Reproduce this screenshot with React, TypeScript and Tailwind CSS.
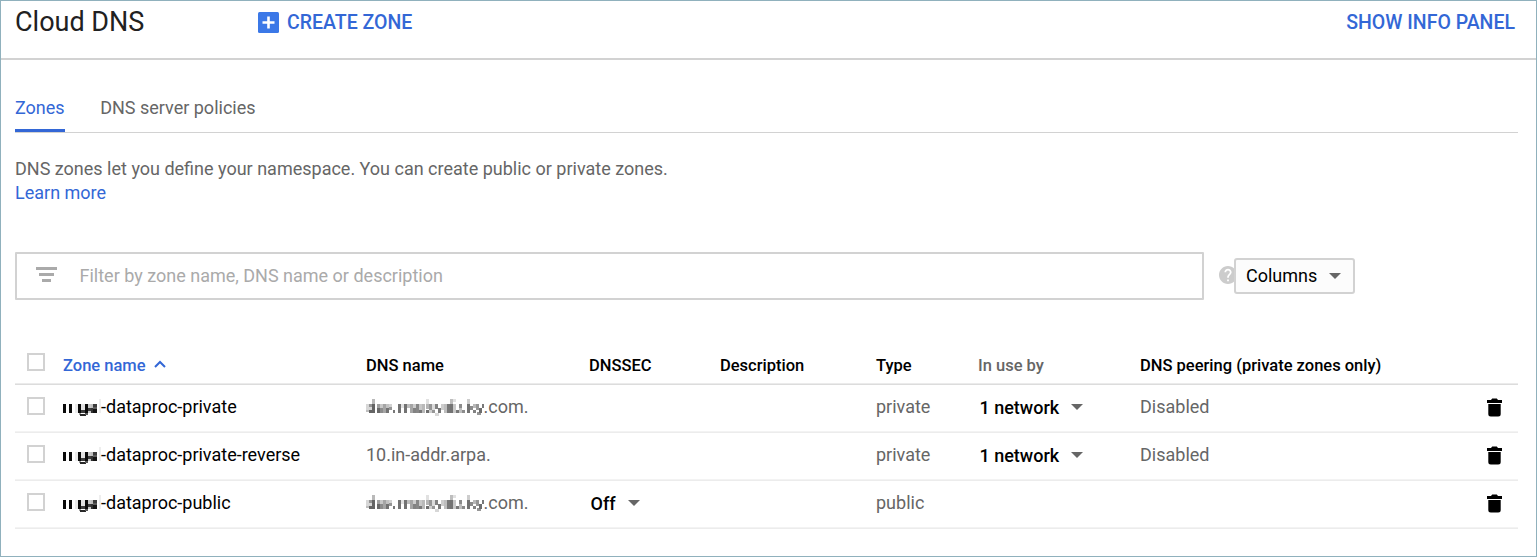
import React from "react";

const COLS =
  "grid grid-cols-[48px_303px_223px_131px_156px_102px_162px_346px_1fr]";

function Checkbox({ className = "" }: { className?: string }) {
  return (
    <span
      role="checkbox"
      aria-checked="false"
      className={"ml-3 block h-[18px] w-[18px] border-2 border-[#d2d2d2] bg-white " + className}
    />
  );
}

function Caret({ className = "" }: { className?: string }) {
  return (
    <svg viewBox="0 0 12 6" className={"h-[6px] w-[12px] shrink-0 fill-[#666] " + className}>
      <path d="M0 0h12L6 6z" />
    </svg>
  );
}

function Trash() {
  return (
    <svg viewBox="0 0 17 20" className="mt-px h-5 w-[17px] fill-black">
      <path d="M1 3h4l1.200-1.400h4.600L12 3h4v3H1z" />
      <path d="M2.300 7h12.400v10a2.500 2.500 0 0 1-2.500 2.500H4.800a2.500 2.500 0 0 1-2.500-2.500z" />
    </svg>
  );
}

type Cell = [x: number, y: number, w: number, h: number, shade: number];

const NAME_CELLS: Cell[] = [
  [0, 7, 3, 9, 10], [6, 7, 3, 9, 10], [12, 7, 3, 9, 235],
  [15, 7, 3, 9, 10], [18, 7, 4, 6, 225], [18, 13, 4, 3, 60],
  [22, 7, 3, 9, 10], [16, 16, 2, 2, 160], [17, 17, 6, 2, 40], [22, 16, 3, 2, 90],
  [25, 7, 3, 4, 200], [25, 11, 3, 3, 60], [25, 14, 3, 2, 200],
  [28, 7, 2, 4, 190], [28, 11, 2, 5, 50], [30, 7, 4, 3, 60], [30, 10, 4, 2, 90], [30, 12, 4, 4, 20],
  [36, 2, 2, 14, 238],
];

const HOST_CELLS: Cell[] = [
  [0, 7, 6, 6, 215], [0, 13, 3, 2, 190], [3, 7, 3, 3, 150], [3, 13, 3, 3, 100], [6, 2, 3, 5, 185], [6, 7, 3, 9, 100],
  [11, 7, 3, 4, 160], [11, 11, 3, 5, 105], [14, 7, 3, 4, 200], [14, 11, 3, 5, 140], [17, 7, 3, 9, 165],
  [20, 7, 3, 4, 195], [20, 11, 3, 5, 115], [23, 7, 3, 3, 210], [23, 10, 3, 3, 150], [27, 13, 2, 3, 120],
  [32, 7, 3, 9, 115], [35, 7, 3, 4, 225], [38, 7, 3, 9, 115], [41, 7, 3, 4, 190], [44, 7, 3, 9, 165], [47, 7, 3, 4, 205], [47, 11, 3, 5, 130],
  [50, 7, 3, 9, 135], [53, 7, 3, 6, 200], [53, 13, 3, 3, 120], [56, 7, 3, 9, 185], [60, 2, 3, 5, 225], [60, 7, 3, 5, 180], [60, 13, 3, 3, 110],
  [63, 7, 3, 6, 150], [63, 13, 3, 3, 205], [66, 7, 3, 6, 220], [66, 13, 3, 3, 150], [69, 7, 3, 5, 130], [69, 16, 4, 3, 215], [72, 11, 3, 5, 120], [75, 7, 3, 6, 205],
  [78, 7, 3, 9, 190], [81, 7, 3, 9, 120], [84, 2, 3, 14, 190], [84, 7, 3, 9, 115], [87, 2, 3, 3, 225], [87, 7, 3, 9, 200], [90, 13, 3, 3, 120],
  [93, 7, 3, 4, 140], [93, 11, 3, 5, 190], [96, 13, 3, 3, 140], [101, 2, 3, 5, 205], [101, 7, 3, 9, 115], [104, 9, 3, 4, 140], [107, 7, 3, 4, 185], [107, 13, 3, 3, 130],
  [110, 7, 3, 6, 150], [111, 15, 4, 3, 150], [113, 11, 3, 5, 110], [116, 7, 2, 4, 120],
];

function Mosaic({ cells, width }: { cells: Cell[]; width: number }) {
  return (
    <svg width={width} height={20} viewBox={`0 0 ${width} 20`} className="mt-px shrink-0" shapeRendering="crispEdges" aria-hidden="true">
      {cells.map(([x, y, w, h, s], i) => (
        <rect key={i} x={x} y={y} width={w} height={h} fill={`rgb(${s},${s},${s})`} />
      ))}
    </svg>
  );
}

interface Zone {
  name: string;
  host: string;
  masked: boolean;
  dnssec?: string;
  type: string;
  networks?: string;
  peering?: string;
}

const ZONES: Zone[] = [
  { name: "-dataproc-private", host: ".com.", masked: true, type: "private", networks: "1 network", peering: "Disabled" },
  { name: "-dataproc-private-reverse", host: "10.in-addr.arpa.", masked: false, type: "private", networks: "1 network", peering: "Disabled" },
  { name: "-dataproc-public", host: ".com.", masked: true, dnssec: "Off", type: "public" },
];

function Row({ zone }: { zone: Zone }) {
  return (
    <div className={COLS + " h-12 items-center border-b border-[#ececec] pb-1 text-[18px] text-[#666] shadow-[inset_0_-1px_0_#f3f3f3]"}>
      <Checkbox className="-mt-px" />
      <div className="flex items-center text-black">
        <Mosaic cells={NAME_CELLS} width={38} />
        <span>{zone.name}</span>
      </div>
      <div className="flex items-center">
        {zone.masked && <Mosaic cells={HOST_CELLS} width={117.5} />}
        <span>{zone.host}</span>
      </div>
      <div className="flex items-center pl-[1.5px] pt-[2px] font-medium text-black">
        {zone.dnssec && (<><span>{zone.dnssec}</span><Caret className="-mt-[2px] ml-[12.5px]" /></>)}
      </div>
      <div />
      <div>{zone.type}</div>
      <div className="flex items-center pl-[1.5px] pt-[2px] font-medium text-black">
        {zone.networks && (<><span>{zone.networks}</span><Caret className="-mt-[2px] ml-[11.5px]" /></>)}
      </div>
      <div>{zone.peering}</div>
      <Trash />
    </div>
  );
}

export default function App() {
  return (
    <div className="flex h-[557px] w-[1537px] flex-col overflow-hidden border border-[#90b1bd] bg-white font-['Roboto',sans-serif] whitespace-nowrap">
      <header className="flex h-[59px] shrink-0 items-start border-b-2 border-[#d2d2d2] pl-[14px] pr-[21px]">
        <h1 className="w-[243px] text-[27px] leading-[43px] text-[#212121]">Cloud DNS</h1>
        <button className="flex h-[42px] items-center gap-[8px] text-[19.500px] font-medium text-[#3367d6]">
          <svg viewBox="0 0 21 21" className="h-[21px] w-[21px]">
            <rect width="21" height="21" rx="1.5" fill="#3b78e7" />
            <path d="M4.500 10.500h12M10.500 4.500v12" stroke="#fff" strokeWidth="2.600" />
          </svg>
          <span className="pt-[2px]">CREATE ZONE</span>
        </button>
        <button className="ml-auto flex h-11 items-center text-[19.500px] font-medium text-[#3367d6]">SHOW INFO PANEL</button>
      </header>

      <main className="flex flex-col pl-[14px] pr-[18px]">
        <nav className="mt-[24px] flex h-[49px] gap-9 border-b border-[#d2d2d2] text-[18px] leading-[47px] text-[#666]">
          <span className="h-12 border-b-3 border-[#3367d6] text-[#3367d6]">Zones</span>
          <span className="-ml-[0.5px]">DNS server policies</span>
        </nav>
        <div className="mt-6 text-[18px] leading-6 text-[#666]">
          <p>DNS zones let you define your namespace. You can create public or private zones.</p>
          <a className="text-[#3367d6]">Learn more</a>
        </div>

        <div className="mt-[47px] flex items-center">
          <div className="flex h-12 w-[1189px] items-center rounded-[1px] border-2 border-[#d2d2d2] pl-[19px]">
            <svg viewBox="0 0 21 15" className="-mt-[3px] h-[15px] w-[21px] fill-[#aaa]">
              <path d="M0 0h21v3H0zM3 6h15v3H3zM6 12h9v3H6z" />
            </svg>
            <span className="ml-[22.500px] pb-[2px] text-[18px] text-[#aaa]">Filter by zone name, DNS name or description</span>
          </div>
          <svg viewBox="2 2 20 20" className="-mt-[3px] ml-[14.500px] -mr-[2.500px] h-[18px] w-[18px] fill-[#ccc]">
            <path d="M12 2C6.480 2 2 6.480 2 12s4.480 10 10 10 10-4.480 10-10S17.520 2 12 2zm1 17h-2v-2h2v2zm2.070-7.750l-.9.920C13.450 12.900 13 13.500 13 15h-2v-.5c0-1.100.45-2.100 1.170-2.830l1.240-1.260c.37-.36.59-.86.59-1.410 0-1.100-.9-2-2-2s-2 .9-2 2H8c0-2.210 1.790-4 4-4s4 1.790 4 4c0 .88-.36 1.680-.93 2.250z" />
          </svg>
          <button className="relative flex h-9 w-[121px] items-center rounded-[3px] border-2 border-[#d2d2d2] bg-[#fcfcfc] pl-[10px] text-[18px] text-black">
            <span className="pb-[2px]">Columns</span>
            <Caret className="ml-3" />
          </button>
        </div>

        <div className="mt-[38px] flex flex-col">
          <div className={COLS + " h-[47px] items-center border-b border-[#dcdcdc] text-[16.500px] font-medium text-black shadow-[inset_0_-1px_0_#ebebeb]"}>
            <Checkbox className="mt-[2px]" />
            <div className="flex items-center gap-2 pt-2.5 text-[#3367d6]">
              Zone name
              <svg viewBox="0 0 12 8" className="-mt-1 h-2 w-3 fill-none stroke-[#3367d6]" strokeWidth="2">
                <path d="M1 7l5-5 5 5" />
              </svg>
            </div>
            <div className="pt-2.5">DNS name</div>
            <div className="pt-2.5">DNSSEC</div>
            <div className="pt-2.5">Description</div>
            <div className="pt-2.5">Type</div>
            <div className="pt-2.5 text-[#666]">In use by</div>
            <div className="pt-2.5">DNS peering (private zones only)</div>
          </div>
          {ZONES.map((zone) => (
            <Row key={zone.name} zone={zone} />
          ))}
        </div>
      </main>
    </div>
  );
}
